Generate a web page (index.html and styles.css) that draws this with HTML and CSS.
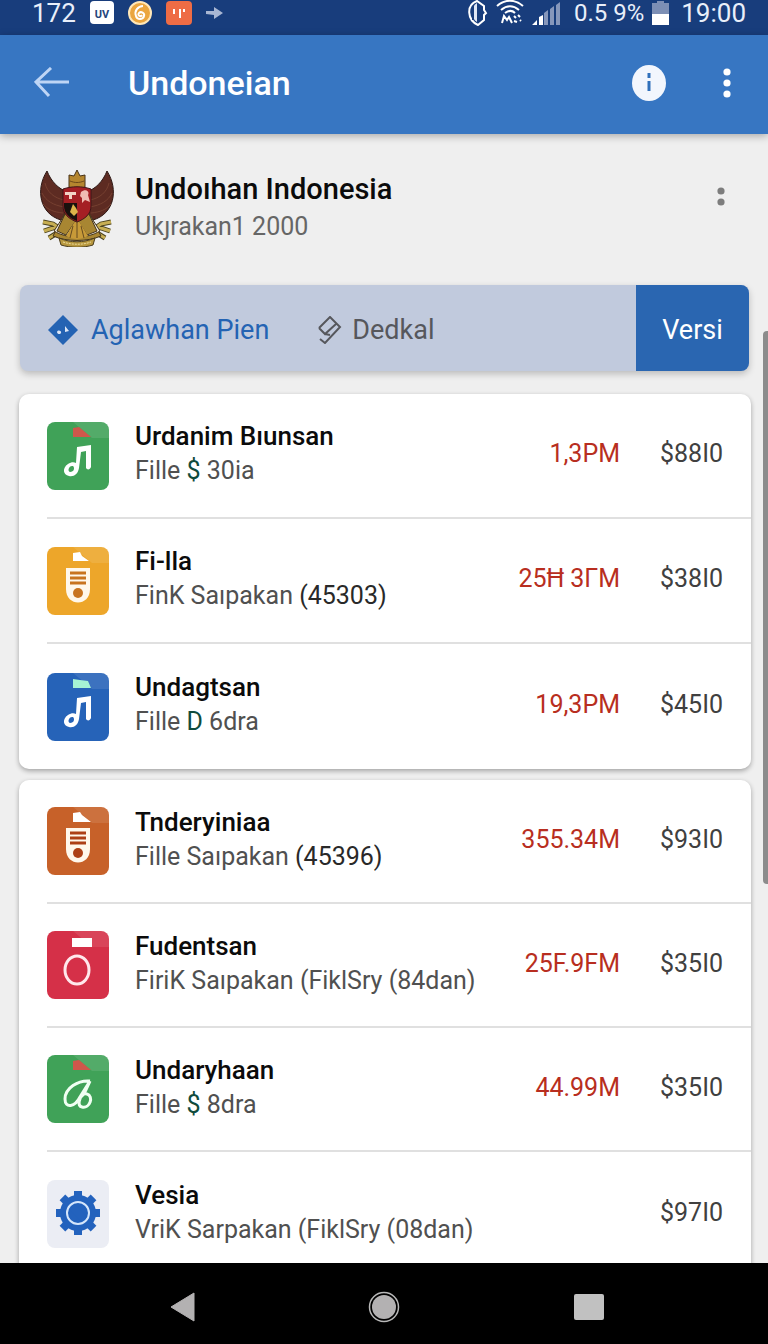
FILE: index.html
```html
<!DOCTYPE html>
<html lang="id">
<head>
  <meta charset="UTF-8">
  <title>Undoneian</title>
  <meta name="viewport" content="width=device-width, initial-scale=1.0">
  <link rel="stylesheet" href="styles.css">
</head>
<body>

<!-- shared file icon glyphs -->
<svg class="sprite" aria-hidden="true">
  <symbol id="note" viewBox="0 0 62 68">
    <path d="M30 25l14-2v22c-1 3-4 3-5 1V29l-5 1-2 16c-1 6-5 9-10 8-6-1-7-8-1-12 3-2 6-2 8-1zM26 44c-4-1-6 5-3 6 4 0 5-4 3-6z" fill="#fff" fill-rule="evenodd"/>
  </symbol>
  <symbol id="remote" viewBox="0 0 62 68">
    <path d="M19 21h24v21c0 18-24 18-24 0z" fill="#fff8ec"/>
    <path d="M23 26h16M23 31h16M23 36h16" stroke="currentColor" stroke-width="3"/>
    <circle cx="31" cy="46" r="5" fill="currentColor"/>
  </symbol>
</svg>

<div class="statusbar">
  <span>172</span>
  <svg width="24" height="24" viewBox="0 0 24 24">
    <rect width="24" height="23" rx="4" fill="#fff"/>
    <text x="12" y="17" class="badge-text">UV</text>
  </svg>
  <svg width="24" height="24" viewBox="0 0 24 24">
    <circle cx="12" cy="12" r="11" fill="#eba63f" stroke="#ffe7b8" stroke-width="2"/>
    <path d="M15 5c-5 0-9 5-7 10 1 4 7 4 8 0 1-3-3-5-5-3-2 3 2 4 3 2" fill="none" stroke="#fff" stroke-width="2"/>
  </svg>
  <svg width="26" height="24" viewBox="0 0 26 24">
    <rect width="26" height="24" rx="4" fill="#ee6c45"/>
    <path d="M8 8v5M14 8v9M14 9h1M18 8v3" stroke="#fff" stroke-width="2"/>
  </svg>
  <svg class="status-arrow" width="17" height="14" viewBox="0 0 17 14">
    <path d="M0 5h8V1l9 6-9 6V9L0 8z" fill="#a9b7d3"/>
  </svg>
  <div class="status-right">
    <svg width="20" height="26" viewBox="0 0 20 26">
      <path d="M9 1C-2 5-1 20 10 25l6-5v-5l2-2-2-3V6z" fill="none" stroke="#fff" stroke-width="2"/>
      <path d="M9 3v19c-6-3-7-15 0-19z" fill="#dfe7f5"/>
      <path d="M5 6v14" stroke="#183d7c" stroke-width="2"/>
    </svg>
    <svg width="28" height="26" viewBox="0 0 28 26">
      <path d="M1 6c8-7 18-7 26 0M5 10c6-5 12-5 18 0M9 13c4-3 7-3 10 0" fill="none" stroke="#fff" stroke-width="2"/>
      <path d="M6 23l2-7 3 4 2-3 3 6M18 16l2 2M22 15l2 2M18 21l3 1M24 20l1 1" fill="none" stroke="#fff" stroke-width="2"/>
    </svg>
    <svg width="28" height="24" viewBox="0 0 28 24">
      <path d="M0 24l5-5v5zM7 16l4-2v10H7z" fill="#fff"/>
      <path d="M12 12l4-3v15h-4zM18 8l4-3v19h-4zM24 4l4-3v23h-4z" fill="#8697bb"/>
    </svg>
    <span class="charge">0.5 9%</span>
    <svg width="17" height="24" viewBox="0 0 17 24">
      <path d="M0 2h5V0h7v2h5v11H0z" fill="#7d8fb5"/>
      <path d="M0 13h17v11H0z" fill="#fff"/>
    </svg>
    <span class="clock">19:00</span>
  </div>
</div>

<header class="appbar">
  <button class="icon-btn" aria-label="Back">
    <svg width="36" height="32" viewBox="0 0 36 32">
      <path d="M17 1L2 15l13 14M2 15h33" fill="none" stroke="#bed5f5" stroke-width="3"/>
    </svg>
  </button>
  <h1>Undoneian</h1>
  <button class="icon-btn" aria-label="Info">
    <svg width="36" height="38" viewBox="0 0 36 38">
      <ellipse cx="18" cy="19" rx="17" ry="18" fill="#f2f6fd"/>
      <path d="M18 9v5M18 17v10" stroke="#3070bb" stroke-width="3"/>
    </svg>
  </button>
  <button class="icon-btn more" aria-label="More">
    <svg width="8" height="30" viewBox="0 0 8 30" fill="#fff">
      <circle cx="4" cy="4" r="3.6"/><circle cx="4" cy="15" r="3.6"/><circle cx="4" cy="26" r="3.6"/>
    </svg>
  </button>
</header>

<main>
  <section class="profile">
    <svg class="emblem" width="76" height="78" viewBox="0 0 76 78">
      <path d="M8 2C-4 21 1 45 22 51l7-5V23C19 20 12 12 8 2z" fill="#5d2b22" stroke="#2d1814"/>
      <path d="M68 2c12 19 7 43-14 49l-7-5V23c10-3 17-11 21-21z" fill="#5d2b22" stroke="#2d1814"/>
      <path d="M6 14c2 9 9 15 19 17M3 24c4 8 11 12 22 14M4 35c5 6 11 8 20 9M70 14c-2 9-9 15-19 17M73 24c-4 8-11 12-22 14M72 35c-5 6-11 8-20 9" fill="none" stroke="#764030"/>
      <path d="M4 53l10 2 9 6M5 62l12-4 6 7M10 69l13-8M72 53l-10 2-9 6M71 62l-12-4-6 7M66 69l-13-8" fill="none" stroke="#4c431e" stroke-width="5"/>
      <path d="M4 53l10 2 9 6M5 62l12-4 6 7M10 69l13-8M72 53l-10 2-9 6M71 62l-12-4-6 7M66 69l-13-8" fill="none" stroke="#c7ae53" stroke-width="3"/>
      <path d="M26 44L14 67c14 6 34 6 48 0L50 44l-12 6z" fill="#a88632" stroke="#44341b"/>
      <path d="M26 45L15 62c13 8 33 8 46 0L50 45l8 17-10 4-10-16-11 16-9-4z" fill="#eee8db" stroke="#44341b"/>
      <path d="M38 49L27 67c7 4 15 4 22 0z" fill="#c79a38"/>
      <path d="M38 50v19M34 57l-3 12M42 57l3 12" stroke="#654b20"/>
      <path d="M20 69c12 5 24 5 36 0l-2 7c-10 3-22 3-32 0z" fill="#b8983f" stroke="#4a3c1c"/>
      <path d="M24 73c9 3 20 3 28 0" fill="none" stroke="#eadb9b" stroke-dasharray="2 1"/>
      <path d="M30 18V6l5 1 3-6 3 6 5-1v12c-5 3-11 3-16 0z" fill="#b5862e" stroke="#463116"/>
      <path d="M31 12c5 2 9 2 14 0" fill="none" stroke="#6b4819"/>
      <path d="M24 20c9-3 19-3 28 0v17c0 8-6 13-14 16-8-3-14-8-14-16z" fill="#a51f24" stroke="#3e1618"/>
      <path d="M25 34h13v18c-8-3-13-8-13-15z" fill="#18110e"/>
      <path d="M26 23h11v3h-4v4h-3v-4h-4z" fill="#f3d4c6"/>
      <path d="M42 23c5-4 9 0 7 3l2 7-5-2-3 3v-5l-2-2z" fill="#f0bcb3"/>
      <path d="M34 35l3 4 2 4-4 4-4-4z" fill="#ddb34a"/>
    </svg>
    <div class="profile-text">
      <h2>Undoıhan Indonesia</h2>
      <p>Ukȷrakan1 2000</p>
    </div>
    <button class="icon-btn profile-more" aria-label="Options">
      <svg width="8" height="20" viewBox="0 0 8 20" fill="#7d7d7d">
        <circle cx="4" cy="4" r="3.6"/><circle cx="4" cy="15" r="3.6"/>
      </svg>
    </button>
  </section>

  <nav class="tabs">
    <button class="tab active">
      <svg width="30" height="32" viewBox="0 0 30 32">
        <path d="M15 1l15 15-15 15L0 16z" fill="#2463b3"/>
        <path d="M9 18c1-3 5-1 4 1s-4 1-4-1zM17 12l4 5-4 1z" fill="#dce6f6"/>
      </svg>
      Aglawhan Pien
    </button>
    <button class="tab">
      <svg width="24" height="28" viewBox="0 0 24 28">
        <path d="M1 12L12 1l10 10L7 27l-5-4M1 12l6 6L18 8M7 18l5 1" fill="none" stroke="#56575c" stroke-width="2"/>
      </svg>
      Dedkal
    </button>
    <button class="tab-action">Versi</button>
  </nav>

  <ul class="card">
    <li class="row">
      <svg class="file green" viewBox="0 0 62 68">
        <path class="fold" d="M26 0h36v16H45z"/>
        <path d="M26 6l6-1 12 10H26z" fill="#cf574b"/>
        <use href="#note"/>
      </svg>
      <div class="info">
        <h3>Urdanim Bıunsan</h3>
        <p>Fille <b>$</b> 30ia</p>
      </div>
      <span class="size">1,3PM</span>
      <span class="price">$88I0</span>
    </li>
    <li class="row">
      <svg class="file yellow" viewBox="0 0 62 68">
        <path class="fold" d="M26 0h36v16H45z"/>
        <path d="M26 6l7-1 2 4 7 5H26z" fill="#fff"/>
        <use href="#remote"/>
      </svg>
      <div class="info">
        <h3>Fi-lla</h3>
        <p>FinK Saıpakan <em>(45303)</em></p>
      </div>
      <span class="size">25Ħ 3ГM</span>
      <span class="price">$38I0</span>
    </li>
    <li class="row">
      <svg class="file blue" viewBox="0 0 62 68">
        <path class="fold" d="M26 0h36v16H45z"/>
        <path d="M26 6l7 1 8 1 3 7H26z" fill="#a5f3d4"/>
        <use href="#note"/>
      </svg>
      <div class="info">
        <h3>Undagtsan</h3>
        <p>Fille <b>D</b> 6dra</p>
      </div>
      <span class="size">19,3PM</span>
      <span class="price">$45I0</span>
    </li>
  </ul>

  <ul class="card compact">
    <li class="row">
      <svg class="file orange" viewBox="0 0 62 68">
        <path class="fold" d="M26 0h36v16H45z"/>
        <path d="M26 6l7-1 2 3 9 7H26z" fill="#fff"/>
        <use href="#remote"/>
      </svg>
      <div class="info">
        <h3>Tnderyiniaa</h3>
        <p>Fille Saıpakan <em>(45396)</em></p>
      </div>
      <span class="size">355.34M</span>
      <span class="price">$93I0</span>
    </li>
    <li class="row">
      <svg class="file red" viewBox="0 0 62 68">
        <path class="fold" d="M26 0h36v16H45z"/>
        <path d="M25 7h20v9H25z" fill="#fff"/>
        <ellipse cx="30" cy="39" rx="12" ry="14" fill="none" stroke="#ffe8ec" stroke-width="3"/>
      </svg>
      <div class="info">
        <h3>Fudentsan</h3>
        <p>FiriK Saıpakan (FiklSry (84dan)</p>
      </div>
      <span class="size">25F.9FM</span>
      <span class="price">$35I0</span>
    </li>
    <li class="row">
      <svg class="file green" viewBox="0 0 62 68">
        <path class="fold" d="M26 0h36v16H45z"/>
        <path d="M26 6l6-1 12 10H26z" fill="#cf574b"/>
        <path d="M43 26c-12-1-25 7-25 18 0 10 10 8 15-2l10-16-6 13c-5 3-7 12-2 13 8 2 12-11 5-13-3-1-5 1-6 3" fill="none" stroke="#f0fff2" stroke-width="3"/>
      </svg>
      <div class="info">
        <h3>Undaryhaan</h3>
        <p>Fille <b>$</b> 8dra</p>
      </div>
      <span class="size">44.99M</span>
      <span class="price">$35I0</span>
    </li>
    <li class="row">
      <svg class="file gray" viewBox="0 0 62 68">
        <g fill="#2362bd">
          <circle cx="31" cy="33" r="18"/>
          <path id="tooth" d="M27 11h8v44h-8z"/>
          <use href="#tooth" transform="rotate(45 31 33)"/>
          <use href="#tooth" transform="rotate(90 31 33)"/>
          <use href="#tooth" transform="rotate(135 31 33)"/>
        </g>
        <circle cx="31" cy="33" r="11" fill="none" stroke="#d5e6fb" stroke-width="2"/>
      </svg>
      <div class="info">
        <h3>Vesia</h3>
        <p>VriK Sarpakan (FiklSry (08dan)</p>
      </div>
      <span class="price">$97I0</span>
    </li>
  </ul>
</main>

<div class="scroll-thumb"></div>

<footer class="navbar">
  <button class="icon-btn" aria-label="Back">
    <svg width="32" height="30" viewBox="0 0 32 30"><path d="M31 1v28L8 15z" fill="#b3b1b2" stroke="#b3b1b2" stroke-linejoin="round"/></svg>
  </button>
  <button class="icon-btn" aria-label="Home">
    <svg width="32" height="32" viewBox="0 0 32 32">
      <circle cx="16" cy="16" r="14.5" fill="none" stroke="#b8b8b8" stroke-width="1.5"/>
      <circle cx="16" cy="16" r="12" fill="#b3b1b2"/>
    </svg>
  </button>
  <button class="icon-btn" aria-label="Recent apps">
    <svg width="30" height="26" viewBox="0 0 30 26"><rect width="30" height="26" rx="2" fill="#c1c1c1"/></svg>
  </button>
</footer>

</body>
</html>
```
FILE: styles.css
```css
* { box-sizing: border-box; }

body {
  margin: 0;
  height: 100vh;
  display: flex;
  flex-direction: column;
  overflow: hidden;
  background: #efefef;
  color: #0b0b0b;
  font-family: Roboto, "Liberation Sans", sans-serif;
}
h1, h2, h3, p, ul { margin: 0; padding: 0; }
svg { display: block; flex: none; }
button {
  border: 0;
  padding: 0;
  background: none;
  font: inherit;
  color: inherit;
  cursor: pointer;
}
.icon-btn {
  display: flex;
  align-items: center;
  justify-content: center;
}
.sprite { position: absolute; width: 0; height: 0; }

/* Status bar */
.statusbar {
  flex: none;
  height: 35px;
  display: flex;
  align-items: center;
  gap: 14px;
  padding: 0 22px 9px 32px;
  background: #183d7c;
  color: #e9effa;
  font-size: 26px;
  line-height: 26px;
}
.badge-text {
  font-size: 11px;
  font-weight: 700;
  text-anchor: middle;
  fill: #25457c;
}
.status-right {
  margin-left: auto;
  display: flex;
  align-items: center;
  gap: 8px;
}
.charge { margin-left: 6px; font-size: 24px; }
.clock { margin-left: 4px; }

/* App bar */
.appbar {
  flex: none;
  height: 99px;
  display: flex;
  align-items: center;
  padding: 0 37px 4px 34px;
  background: #3776c2;
  color: #fff;
  box-shadow: 0 2px 8px rgba(0,0,0,0.3);
  z-index: 1;
}
.appbar h1 {
  flex: 1;
  margin-left: 58px;
  font-size: 34px;
  line-height: 40px;
  font-weight: 500;
}
.more { margin-left: 56px; }

main {
  flex: 1;
  min-height: 0;
  overflow: hidden;
  padding: 0 17px 0 19px;
}

/* Profile */
.profile {
  display: flex;
  align-items: center;
  height: 151px;
  padding: 0 26px 4px 20px;
}
.profile-text { flex: 1; margin-left: 20px; }
.profile h2 {
  font-size: 29px;
  line-height: 38px;
  font-weight: 500;
}
.profile p {
  font-size: 25px;
  line-height: 38px;
  color: #666;
}
.profile-more { padding-bottom: 22px; }

/* Tabs */
.tabs {
  display: flex;
  height: 86px;
  margin: 0 2px 0 1px;
  border-radius: 8px;
  overflow: hidden;
  background: #c1cadd;
  box-shadow: 0 3px 7px rgba(0,0,0,0.22);
  font-size: 27px;
}
.tab {
  display: flex;
  align-items: center;
  gap: 10px;
  padding: 4px 21px 0 28px;
  color: #56575c;
}
.tab.active { gap: 13px; color: #2463b3; }
.tab-action {
  width: 113px;
  margin-left: auto;
  padding-top: 4px;
  background: #2a66b1;
  color: #fff;
}

/* Lists */
.card {
  margin-top: 23px;
  border-radius: 10px;
  background: #fff;
  box-shadow: 0 2px 5px rgba(0,0,0,0.32);
  list-style: none;
}
.row {
  display: flex;
  align-items: center;
  height: 125px;
  margin-left: 28px;
  padding-right: 28px;
  border-bottom: 2px solid #e0e0e0;
}
.row:last-child { border-bottom: 0; }
.compact { margin-top: 11px; }
.compact .row { height: 124px; }
.file {
  width: 62px;
  height: 68px;
  border-radius: 8px;
}
.fold { fill: rgba(255,255,255,0.1); }
.green { background: #40a258; }
.yellow { background: #eda62a; color: #c87420; }
.blue { background: #2663b8; }
.orange { background: #c76129; color: #ad4016; }
.red { background: #d53048; }
.gray { background: #ebedf4; }

.info {
  flex: 1;
  margin-left: 26px;
  padding-bottom: 4px;
}
.info h3 {
  font-size: 26px;
  line-height: 35px;
  font-weight: 500;
}
.info p {
  font-size: 25px;
  line-height: 34px;
  color: #505050;
  white-space: nowrap;
}
.info b { font-weight: 400; color: #104b3c; }
.info em { font-style: normal; color: #292929; }
.size,
.price {
  padding-bottom: 4px;
  font-size: 25px;
}
.size { color: #b82e20; }
.price {
  width: 103px;
  text-align: right;
  color: #404040;
}

.scroll-thumb {
  position: absolute;
  top: 331px;
  right: 0;
  width: 5px;
  height: 553px;
  border-radius: 4px 0 0 4px;
  background: #8c8c8c;
}

/* System navigation */
.navbar {
  flex: none;
  height: 81px;
  display: grid;
  grid-template-columns: repeat(3, 1fr);
  padding: 6px 10% 0;
  background: #000;
  z-index: 1;
}
```
